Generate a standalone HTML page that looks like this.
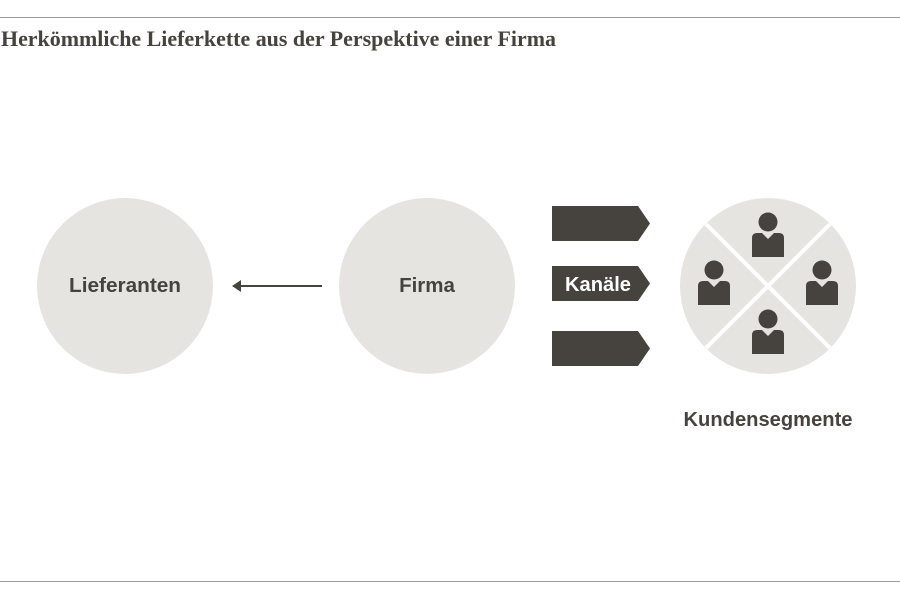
<!DOCTYPE html>
<html><head><meta charset="utf-8"><style>
html,body{margin:0;padding:0;background:#fff;width:900px;height:600px;overflow:hidden}
</style></head><body>
<svg width="900" height="600" viewBox="0 0 900 600" xmlns="http://www.w3.org/2000/svg">
<line x1="0" y1="17.5" x2="900" y2="17.5" stroke="#9a9a9a" stroke-width="1"/>
<line x1="0" y1="581.5" x2="900" y2="581.5" stroke="#9a9a9a" stroke-width="1"/>
<text x="1" y="46" font-family="Liberation Serif, serif" font-weight="bold" font-size="21.8" fill="#46433e" textLength="555" lengthAdjust="spacingAndGlyphs">Herkömmliche Lieferkette aus der Perspektive einer Firma</text>
<circle cx="125" cy="286" r="88" fill="#e5e4e0"/>
<circle cx="427" cy="286" r="88" fill="#e5e4e0"/>
<circle cx="768" cy="286" r="88" fill="#e5e4e0"/>
<text x="125" y="292" text-anchor="middle" font-family="Liberation Sans, sans-serif" font-weight="bold" font-size="20.5" fill="#46433e" textLength="112" lengthAdjust="spacingAndGlyphs">Lieferanten</text>
<text x="427" y="292" text-anchor="middle" font-family="Liberation Sans, sans-serif" font-weight="bold" font-size="20.5" fill="#46433e">Firma</text>
<line x1="240" y1="286" x2="322" y2="286" stroke="#46433e" stroke-width="2"/>
<polygon points="232,286 241,280 241,292" fill="#46433e"/>
<polygon points="552,206 638,206 650,223.5 638,241 552,241" fill="#46433e"/>
<polygon points="552,266 638,266 650,283.5 638,301 552,301" fill="#46433e"/>
<polygon points="552,331 638,331 650,348.5 638,366 552,366" fill="#46433e"/>
<text x="598" y="291" text-anchor="middle" font-family="Liberation Sans, sans-serif" font-weight="bold" font-size="20" fill="#fff" textLength="66" lengthAdjust="spacingAndGlyphs">Kanäle</text>
<line x1="706" y1="224" x2="830" y2="348" stroke="#fff" stroke-width="4"/>
<line x1="830" y1="224" x2="706" y2="348" stroke="#fff" stroke-width="4"/>
<g fill="#46433e">
<g transform="translate(768,222)"><circle cx="0" cy="0" r="9.5"/><path d="M-16 16 Q-16 11 -11 11 L-6 11 L0 17 L6 11 L11 11 Q16 11 16 16 L16 35 L-16 35 Z"/></g>
<g transform="translate(714,270)"><circle cx="0" cy="0" r="9.5"/><path d="M-16 16 Q-16 11 -11 11 L-6 11 L0 17 L6 11 L11 11 Q16 11 16 16 L16 35 L-16 35 Z"/></g>
<g transform="translate(822,270)"><circle cx="0" cy="0" r="9.5"/><path d="M-16 16 Q-16 11 -11 11 L-6 11 L0 17 L6 11 L11 11 Q16 11 16 16 L16 35 L-16 35 Z"/></g>
<g transform="translate(768,319)"><circle cx="0" cy="0" r="9.5"/><path d="M-16 16 Q-16 11 -11 11 L-6 11 L0 17 L6 11 L11 11 Q16 11 16 16 L16 35 L-16 35 Z"/></g>
</g>
<text x="768" y="426" text-anchor="middle" font-family="Liberation Sans, sans-serif" font-weight="bold" font-size="20" fill="#46433e" textLength="169" lengthAdjust="spacingAndGlyphs">Kundensegmente</text>
</svg>
</body></html>
